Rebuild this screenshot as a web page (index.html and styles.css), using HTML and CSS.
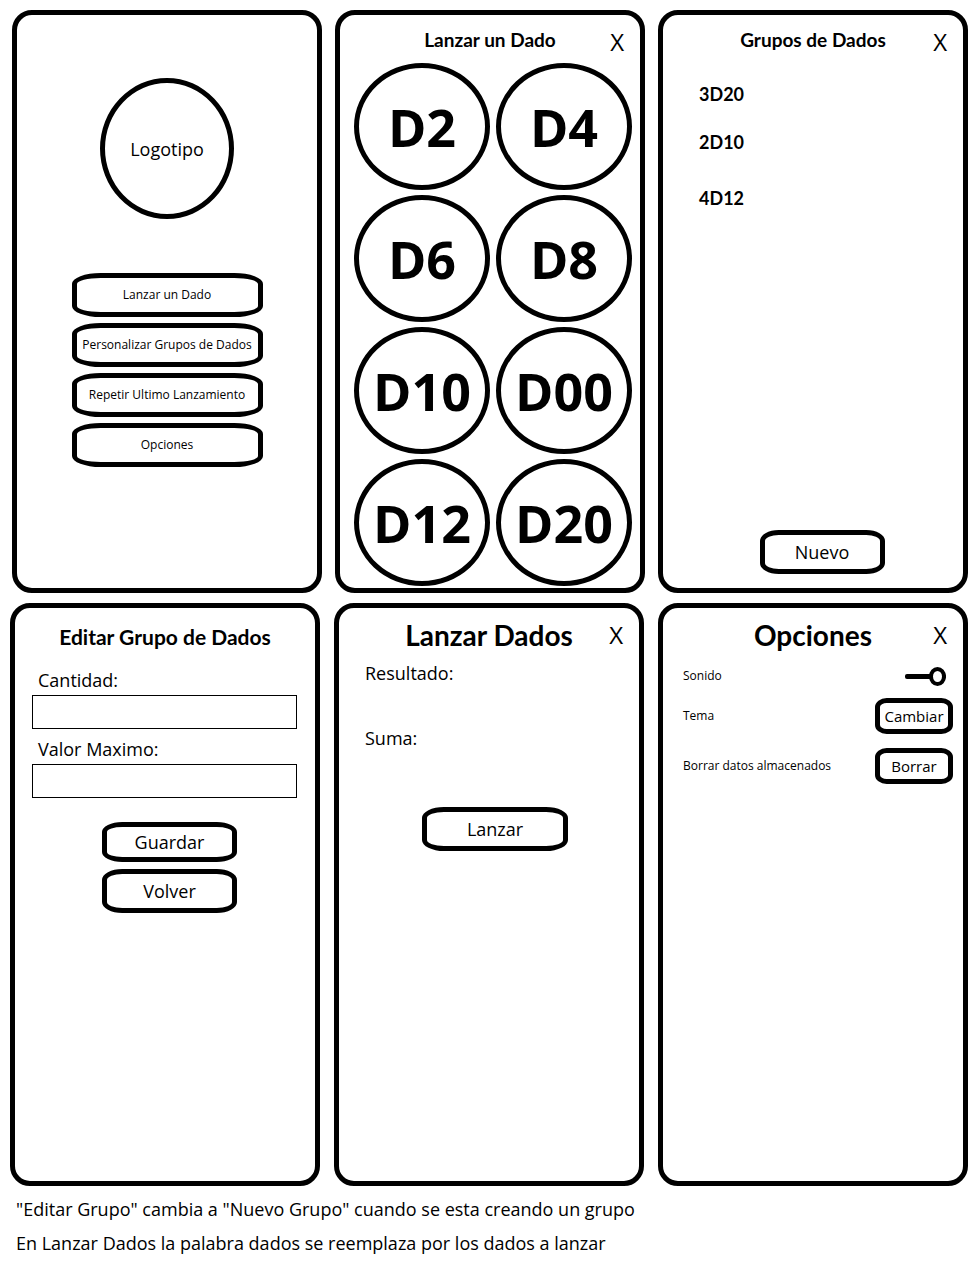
FILE: index.html
```html
<!DOCTYPE html>
<html lang="es">
<head>
<meta charset="utf-8">
<meta name="viewport" content="width=device-width, initial-scale=1">
<title>Lanzador de Dados</title>
<link rel="stylesheet" href="styles.css">
</head>
<body>
<main class="board">
  <div class="row row--top">
    <section class="screen home">
      <div class="logo">Logotipo</div>
      <nav class="menu">
        <button type="button" class="btn btn--menu">Lanzar un Dado</button>
        <button type="button" class="btn btn--menu">Personalizar Grupos de Dados</button>
        <button type="button" class="btn btn--menu">Repetir Ultimo Lanzamiento</button>
        <button type="button" class="btn btn--menu">Opciones</button>
      </nav>
    </section>

    <section class="screen">
      <header class="header">
        <h2 class="title title--small">Lanzar un Dado</h2>
        <button type="button" class="close">X</button>
      </header>
      <div class="dice">
        <button type="button" class="die">D2</button>
        <button type="button" class="die">D4</button>
        <button type="button" class="die">D6</button>
        <button type="button" class="die">D8</button>
        <button type="button" class="die">D10</button>
        <button type="button" class="die">D00</button>
        <button type="button" class="die">D12</button>
        <button type="button" class="die">D20</button>
      </div>
    </section>

    <section class="screen">
      <header class="header">
        <h2 class="title title--small">Grupos de Dados</h2>
        <button type="button" class="close">X</button>
      </header>
      <ul class="groups">
        <li>3D20</li>
        <li>2D10</li>
        <li>4D12</li>
      </ul>
      <div class="footer">
        <button type="button" class="btn btn--new">Nuevo</button>
      </div>
    </section>
  </div>

  <div class="row row--bottom">
    <section class="screen">
      <header class="header header--low">
        <h2 class="title title--medium">Editar Grupo de Dados</h2>
      </header>
      <form class="form">
        <div class="field">
          <label for="cantidad">Cantidad:</label>
          <input id="cantidad" type="text">
        </div>
        <div class="field">
          <label for="maximo">Valor Maximo:</label>
          <input id="maximo" type="text">
        </div>
        <div class="actions">
          <button type="button" class="btn btn--save">Guardar</button>
          <button type="button" class="btn btn--back">Volver</button>
        </div>
      </form>
    </section>

    <section class="screen">
      <header class="header">
        <h2 class="title title--large">Lanzar Dados</h2>
        <button type="button" class="close">X</button>
      </header>
      <div class="result">
        <p>Resultado:</p>
        <p>Suma:</p>
        <button type="button" class="btn btn--roll">Lanzar</button>
      </div>
    </section>

    <section class="screen">
      <header class="header">
        <h2 class="title title--large">Opciones</h2>
        <button type="button" class="close">X</button>
      </header>
      <div class="options">
        <div class="option">
          <label for="sonido">Sonido</label>
          <input id="sonido" class="slider" type="range" min="0" max="1" value="1">
        </div>
        <div class="option">
          <span>Tema</span>
          <button type="button" class="btn btn--option">Cambiar</button>
        </div>
        <div class="option option--data">
          <span>Borrar datos almacenados</span>
          <button type="button" class="btn btn--option">Borrar</button>
        </div>
      </div>
    </section>
  </div>

  <div class="notes">
    <p>"Editar Grupo" cambia a "Nuevo Grupo" cuando se esta creando un grupo</p>
    <p>En Lanzar Dados la palabra dados se reemplaza por los dados a lanzar</p>
  </div>
</main>
</body>
</html>
```
FILE: styles.css
```css
* {
  box-sizing: border-box;
}

body {
  margin: 0;
  background: #fff;
  color: #000;
  font-family: "Open Sans", "Noto Sans", sans-serif;
  font-size: 18px;
  line-height: 24px;
}

h2,
p,
ul {
  margin: 0;
  padding: 0;
}

button,
input {
  font: inherit;
  color: inherit;
}

.board {
  display: flex;
  flex-direction: column;
  gap: 10px;
  padding: 10px 0 8px;
}

.row {
  display: grid;
  grid-template-columns: repeat(3, 1fr);
}

.row--top {
  gap: 13px;
  padding: 0 10px 0 12px;
}

.row--bottom {
  gap: 14px;
  padding: 0 10px;
}

.screen {
  display: flex;
  flex-direction: column;
  min-height: 583px;
  border: 5px solid #000;
  border-radius: 20px;
}

/* Header */
.header {
  display: grid;
  grid-template-columns: 1fr auto 1fr;
  align-items: start;
  min-height: 42px;
  padding: 12px 16px 0;
}

.header--low {
  min-height: 46px;
  padding-top: 14px;
}

.title {
  grid-column: 2;
  font-family: Lato, "Open Sans", sans-serif;
  font-weight: 700;
  line-height: 30px;
}

.title--small {
  font-size: 19px;
  line-height: 26px;
}

.title--medium {
  font-size: 21px;
}

.title--large {
  font-size: 28px;
}

.close {
  justify-self: end;
  padding: 0;
  border: 0;
  background: none;
  font-size: 24px;
  line-height: 30px;
}

/* Outlined buttons */
.btn {
  height: 44px;
  padding: 0;
  border: 5px solid #000;
  border-radius: 15% / 25%;
  background: #fff;
}

.btn--menu {
  width: 191px;
  font-size: 12px;
}

.btn--new {
  width: 125px;
}

.btn--save {
  width: 135px;
  height: 40px;
}

.btn--back {
  width: 135px;
}

.btn--roll {
  width: 146px;
}

.btn--option {
  width: 78px;
  height: 36px;
  font-size: 15px;
}

/* Home */
.home {
  align-items: center;
  gap: 54px;
  padding-top: 63px;
}

.logo {
  display: flex;
  align-items: center;
  justify-content: center;
  width: 134px;
  height: 141px;
  border: 5px solid #000;
  border-radius: 50%;
}

.menu {
  display: flex;
  flex-direction: column;
  gap: 6px;
}

/* Dice */
.dice {
  display: grid;
  grid-template-columns: 1fr 1fr;
  gap: 5px 6px;
  padding: 6px 8px 0 14px;
}

.die {
  height: 127px;
  padding: 0;
  border: 5px solid #000;
  border-radius: 50%;
  background: #fff;
  font-family: "Open Sans", "Noto Sans", sans-serif;
  font-size: 52px;
  font-weight: 700;
}

/* Groups */
.groups {
  display: flex;
  flex-direction: column;
  gap: 24px;
  padding: 25px 36px 0;
  list-style: none;
  font-family: Lato, "Open Sans", sans-serif;
  font-weight: 700;
}

.groups li:last-child {
  padding-top: 8px;
}

.footer {
  display: flex;
  justify-content: center;
  margin-top: auto;
  padding: 0 0 14px 18px;
}

/* Group form */
.form {
  display: flex;
  flex-direction: column;
  gap: 8px;
  padding: 14px 18px 0 17px;
}

.field {
  display: flex;
  flex-direction: column;
  gap: 3px;
}

.field label {
  padding-left: 6px;
}

.field input {
  width: 100%;
  height: 34px;
  padding: 0 8px;
  border: 1px solid #000;
  background: #fff;
}

.actions {
  display: flex;
  flex-direction: column;
  align-items: center;
  gap: 7px;
  padding: 16px 0 0 10px;
}

/* Roll result */
.result {
  display: flex;
  flex-direction: column;
  gap: 41px;
  padding: 11px 0 0 26px;
}

.btn--roll {
  align-self: center;
  margin: 16px 14px 0 0;
}

/* Options */
.options {
  display: flex;
  flex-direction: column;
  gap: 4px;
  padding: 8px 10px 0 20px;
  font-size: 12px;
}

.option {
  display: flex;
  align-items: center;
  justify-content: space-between;
  min-height: 36px;
}

.option--data {
  margin-top: 10px;
}

.slider {
  width: 41px;
  height: 19px;
  margin: 0 7px 0 0;
  appearance: none;
  background: none;
}

.slider::-webkit-slider-runnable-track {
  height: 5px;
  border-radius: 2px;
  background: #000;
}

.slider::-webkit-slider-thumb {
  width: 17px;
  height: 19px;
  margin-top: -7px;
  appearance: none;
  border: 4px solid #000;
  border-radius: 50%;
  background: #fff;
}

/* Notes */
.notes {
  margin-top: -4px;
  padding: 0 16px;
  line-height: 34px;
}

@media (max-width: 900px) {
  .row {
    grid-template-columns: repeat(auto-fit, minmax(300px, 1fr));
  }
}
```
